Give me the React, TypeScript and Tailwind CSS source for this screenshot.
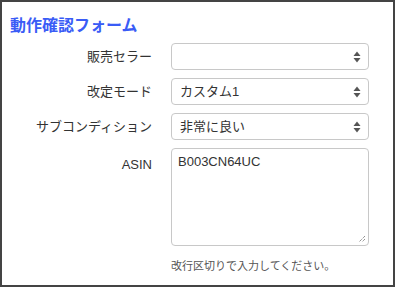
import React from "react";

const font = { fontFamily: '"Liberation Sans", "Noto Sans CJK JP", sans-serif' };

const Arrows = () => (
  <svg width="8" height="13" viewBox="0 0 8 13" className="absolute right-[7px] top-1/2 -translate-y-1/2">
    <path d="M4 1 L7.5 5.5 L0.5 5.5 Z" fill="#555" />
    <path d="M4 12 L7.5 7.5 L0.5 7.5 Z" fill="#555" />
  </svg>
);

const SelectBox = ({ value }: { value?: string }) => (
  <div className="relative h-[27px] w-[198px] rounded-[4px] border border-[#c8c8c8] bg-white pl-[8px] text-[13px] leading-[25px] text-[#333]">
    {value}
    <Arrows />
  </div>
);

const rows = [
  { label: "販売セラー", value: "" },
  { label: "改定モード", value: "カスタム1" },
  { label: "サブコンディション", value: "非常に良い" },
];

export default function App() {
  return (
    <div style={font} className="h-[287px] w-[395px] border-2 border-[#444] bg-white pl-[8px] pt-[12px]">
      <h1 className="text-[16px] font-bold leading-[24px] text-[#3a5cf6]">動作確認フォーム</h1>
      <div className="mt-[5px] flex flex-col gap-[8px]">
        {rows.map((r) => (
          <div key={r.label} className="flex items-center">
            <div className="w-[142px] text-right text-[13px] text-[#333]">{r.label}</div>
            <div className="ml-[19px]">
              <SelectBox value={r.value} />
            </div>
          </div>
        ))}
        <div className="flex items-start">
          <div className="w-[142px] pt-[7px] text-right text-[13px] text-[#333]">ASIN</div>
          <div className="ml-[19px] flex flex-col">
            <div className="relative h-[98px] w-[198px] rounded-[4px] border border-[#c8c8c8] bg-white px-[6px] pt-[3px] text-[13px] text-[#333]">
              B003CN64UC
              <svg width="8" height="8" viewBox="0 0 8 8" className="absolute bottom-[2px] right-[2px]">
                <path d="M7 1 L1 7 M7 4 L4 7" stroke="#666" strokeWidth="1" strokeDasharray="1 1" />
              </svg>
            </div>
            <div className="mt-[12px] text-[11px] leading-[16px] text-[#555]">改行区切りで入力してください。</div>
          </div>
        </div>
      </div>
    </div>
  );
}
